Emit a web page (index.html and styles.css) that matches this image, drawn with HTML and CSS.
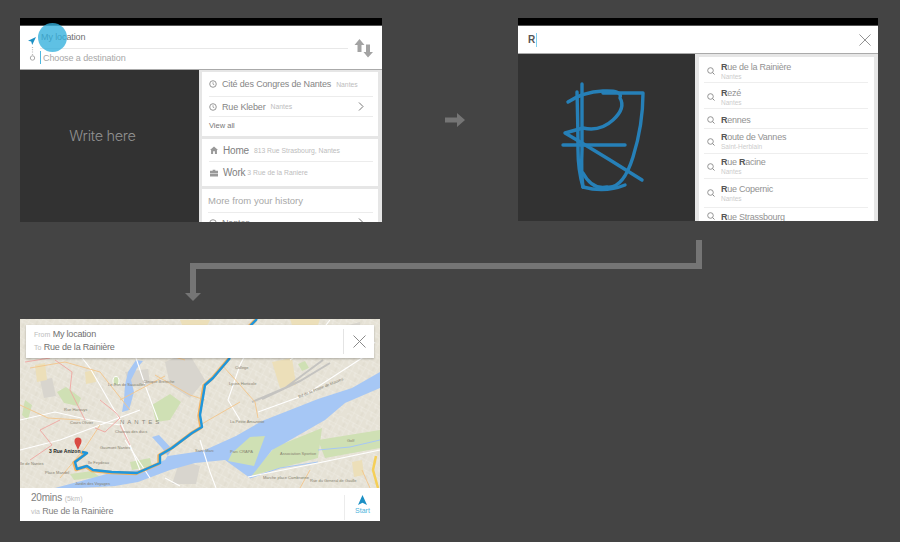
FILE: index.html
```html
<!DOCTYPE html>
<html lang="fr">
<head>
  <meta charset="UTF-8">
  <meta name="viewport" content="width=device-width, initial-scale=1.0">
  <title>Navigation flow</title>
  <link rel="stylesheet" href="styles.css">
</head>
<body>
  <div class="board">
    <div class="board-row">
      <!-- ecran 1 : choix destination -->
      <section class="screen screen-home">
        <div class="status"></div>
        <header class="route-head">
          <div class="route-icons">
            <svg width="12" height="24" viewBox="0 0 12 24">
              <path d="M9 0 1 3.800 4.200 4.600 5.200 8z" fill="#1b8fc4"/>
              <path d="M5.500 10v8" stroke="#bbb" stroke-width="1.200" stroke-dasharray="1 1.300" fill="none"/>
              <circle cx="5.500" cy="21" r="2.200" fill="none" stroke="#aaa" stroke-width="1"/>
            </svg>
          </div>
          <div class="route-fields">
            <div class="field field-from">My location</div>
            <div class="field field-to">Choose a destination</div>
          </div>
          <svg class="swap" width="20" height="20" viewBox="0 0 20 20">
            <path d="M5.500 1 10.500 7H7.500V14H3.500V7H.5z" fill="#a3a3a3"/>
            <path d="M12 6.500h4v7.500h3L14 19.500 9.500 14h2.500z" fill="#a3a3a3"/>
          </svg>
        </header>
        <div class="touch-dot"></div>
        <div class="screen-body">
          <div class="pad pad-home"><span class="write-here">Write here</span></div>
          <div class="side side-home">
            <div class="card">
              <div class="row row-a">
                <svg class="ico" width="8" height="8" viewBox="0 0 9 9"><circle cx="4.500" cy="4.500" r="3.700" fill="none" stroke="#888"/><path d="M4.500 2.500v2.200l1.500.8" fill="none" stroke="#888" stroke-width=".8"/></svg>
                <span class="place">Cité des Congres de Nantes</span><small>Nantes</small>
              </div>
              <div class="row row-a">
                <svg class="ico" width="8" height="8" viewBox="0 0 9 9"><circle cx="4.500" cy="4.500" r="3.700" fill="none" stroke="#888"/><path d="M4.500 2.500v2.200l1.500.8" fill="none" stroke="#888" stroke-width=".8"/></svg>
                <span class="place">Rue Kleber</span><small>Nantes</small>
                <svg class="chev" width="6" height="9" viewBox="0 0 6 9"><path d="M1 .5 5 4.500 1 8.500" fill="none" stroke="#777"/></svg>
              </div>
              <div class="view-all">View all</div>
            </div>
            <div class="card">
              <div class="row row-b">
                <svg class="ico" width="8" height="8" viewBox="0 0 9 9"><path d="M4.500 .5 9 4.500H7.800V9H5.500V6h-2v3H1.200V4.500H0z" fill="#999"/></svg>
                <span class="place-lg">Home</span><small>813 Rue Strasbourg, Nantes</small>
              </div>
              <div class="row row-b">
                <svg class="ico" width="8" height="8" viewBox="0 0 9 9"><path d="M3 2V.8h3V2h3v2.500H0V2zM0 5.200h9V8.500H0z" fill="#999"/></svg>
                <span class="place-lg tight-name">Work</span><small>3 Rue de la Raniere</small>
              </div>
            </div>
            <div class="card">
              <div class="history-title">More from your history</div>
              <div class="row row-a">
                <svg class="ico" width="8" height="8" viewBox="0 0 9 9"><circle cx="4.500" cy="4.500" r="3.700" fill="none" stroke="#888"/></svg>
                <span class="place">Nantes</span>
                <svg class="chev" width="6" height="9" viewBox="0 0 6 9"><path d="M1 .5 5 4.500 1 8.500" fill="none" stroke="#777"/></svg>
              </div>
            </div>
          </div>
        </div>
      </section>

      <div class="next-arrow">
        <svg width="20" height="14" viewBox="0 0 20 14"><path d="M0 4.500H12V0L20 7 12 14V9.500H0z" fill="#757575"/></svg>
      </div>

      <!-- ecran 2 : ecriture -->
      <section class="screen screen-write">
        <div class="status"></div>
        <header class="search-head">
          <span class="typed">R</span><span class="caret"></span>
          <svg class="close" width="12" height="12" viewBox="0 0 13 13"><path d="M.5.5l12 12M12.500.5l-12 12" stroke="#8a8a8a" fill="none"/></svg>
        </header>
        <div class="screen-body">
          <div class="pad pad-write">
            <svg class="scribble" width="177" height="167" viewBox="518 54 177 167">
              <g fill="none" stroke="#2680b8" stroke-width="3.400" stroke-linecap="round" stroke-linejoin="round">
                <path d="M582 84V150Q581 172 583 187"/>
                <path d="M577 92Q578 130 578 150T583 187"/>
                <path d="M568 102Q583 92 603 91T620 98Q626 108 613 120T583 128L565 133 582 143 610 160 642 180"/>
                <path d="M603 93H643Q643 125 633 157T607 187Q592 190 583 173"/>
                <path d="M563 145H625"/>
                <path d="M583 187Q605 193 625 185"/>
              </g>
            </svg>
          </div>
          <div class="side side-write">
            <div class="card results">
              <div class="result r1"><svg class="ico-s" width="8" height="8" viewBox="0 0 8 8"><circle cx="3.500" cy="3.500" r="2.800" fill="none" stroke="#888" stroke-width=".9"/><path d="M5.500 5.500 7.500 7.500" stroke="#888"/></svg><div><p><b>R</b>ue de la Rainière</p><small>Nantes</small></div></div>
              <div class="result r2"><svg class="ico-s" width="8" height="8" viewBox="0 0 8 8"><circle cx="3.500" cy="3.500" r="2.800" fill="none" stroke="#888" stroke-width=".9"/><path d="M5.500 5.500 7.500 7.500" stroke="#888"/></svg><div><p><b>R</b>ezé</p><small>Nantes</small></div></div>
              <div class="result r3"><svg class="ico-s" width="8" height="8" viewBox="0 0 8 8"><circle cx="3.500" cy="3.500" r="2.800" fill="none" stroke="#888" stroke-width=".9"/><path d="M5.500 5.500 7.500 7.500" stroke="#888"/></svg><div><p><b>R</b>ennes</p></div></div>
              <div class="result r4"><svg class="ico-s" width="8" height="8" viewBox="0 0 8 8"><circle cx="3.500" cy="3.500" r="2.800" fill="none" stroke="#888" stroke-width=".9"/><path d="M5.500 5.500 7.500 7.500" stroke="#888"/></svg><div><p><b>R</b>oute de Vannes</p><small>Saint-Herblain</small></div></div>
              <div class="result r5"><svg class="ico-s" width="8" height="8" viewBox="0 0 8 8"><circle cx="3.500" cy="3.500" r="2.800" fill="none" stroke="#888" stroke-width=".9"/><path d="M5.500 5.500 7.500 7.500" stroke="#888"/></svg><div><p><b>R</b>ue <b>R</b>acine</p><small>Nantes</small></div></div>
              <div class="result r6"><svg class="ico-s" width="8" height="8" viewBox="0 0 8 8"><circle cx="3.500" cy="3.500" r="2.800" fill="none" stroke="#888" stroke-width=".9"/><path d="M5.500 5.500 7.500 7.500" stroke="#888"/></svg><div><p><b>R</b>ue Copernic</p><small>Nantes</small></div></div>
              <div class="result r7"><svg class="ico-s" width="8" height="8" viewBox="0 0 8 8"><circle cx="3.500" cy="3.500" r="2.800" fill="none" stroke="#888" stroke-width=".9"/><path d="M5.500 5.500 7.500 7.500" stroke="#888"/></svg><div><p><b>R</b>ue Strassbourg</p></div></div>
            </div>
          </div>
        </div>
      </section>
    </div>

    <!-- ecran 3 : itineraire -->
    <section class="screen screen-map">
      <div class="map">
        <svg class="map-art" width="360" height="169" viewBox="20 319 360 169">
          <defs>
            <pattern id="streets" width="11" height="9" patternUnits="userSpaceOnUse" patternTransform="rotate(28)">
              <path d="M0 0H11M0 0V9M5 0V4M5 4H11" fill="none" stroke="#fff" stroke-width=".5" opacity=".55"/>
              <path d="M8 4V9" fill="none" stroke="#d2cdbf" stroke-width=".4"/>
            </pattern>
          </defs>
          <rect x="20" y="319" width="360" height="169" fill="#e6e2d6"/>
          <rect x="20" y="319" width="360" height="169" fill="url(#streets)"/>
          <!-- zones -->
          <g fill="#d8d5ce">
            <path d="M165 362 188 352 205 380 190 398 170 385z"/>
            <path d="M125 372 148 369 150 384 130 387z"/>
            <path d="M40 380 52 378 56 396 44 398z"/>
            <path d="M180 460 200 466 196 484 172 484z"/>
            <path d="M100 340 120 335 122 350 102 352z"/>
            <path d="M330 330 360 322 362 345 335 350z"/>
          </g>
          <g fill="#ecdfb9">
            <path d="M272 362 292 358 296 385 280 388z"/>
            <path d="M35 365 45 363 47 380 37 382z"/>
            <path d="M85 372 94 370 96 382 86 384z"/>
            <path d="M180 320 210 320 205 330H184z"/>
            <path d="M290 319H320L318 325H292z"/>
            <path d="M352 462 362 460 364 475 354 477z"/>
            <path d="M150 340 165 338 166 350 152 352z"/>
          </g>
          <g fill="#cfe0b4">
            <path d="M57 392 66 387 81 398 78 406 64 403z"/>
            <path d="M152 405 170 394 181 402 170 420 156 422z"/>
            <path d="M298 364 305 361 309 368 302 371z"/>
            <path d="M318 440 380 430V448L325 458z"/>
            <path d="M275 447 322 428 318 458 250 476z"/>
            <path d="M130 462 150 458 152 466 132 470z"/>
            <path d="M70 474 92 471 100 477 74 480z"/>
            <path d="M25 400 32 405 28 420 22 415z"/>
          </g>
          <!-- Loire -->
          <path d="M380 372 352 388 318 399 285 412 262 421 236 436 205 450 195 452 168 456 162 448 152 437 159 435 172 449 165 460 140 470 110 473 85 480 55 488H80L115 486 138 482 170 470 195 463 225 460 250 478 272 450 285 443 325 420 345 403 380 388z" fill="#a6c7f5"/>
          <path d="M232 453 250 437 265 436 254 466 228 461z" fill="#cfe0b4"/>
          <path d="M337 416 347 409 352 410 344 416z" fill="#e6e2d6"/>
          <path d="M136 360 128 372 125 385 124 400 122 412 129 410 134 392 131 380 137 368 143 361z" fill="#a6c7f5"/>
          <ellipse cx="116" cy="381" rx="3" ry="4.500" fill="#cfe0b4" stroke="#fff"/>
          <path d="M250 478 280 468 318 462M318 450 350 447 380 440M272 424 300 410" fill="none" stroke="#a6c7f5" stroke-width="1"/>
          <!-- voies ferrees -->
          <path d="M252 402 285 388 323 360M262 399 300 381 330 363" fill="none" stroke="#c4c3c0" stroke-width="2"/>
          <!-- routes -->
          <g fill="none" stroke="#fff" stroke-width="1.100">
            <path d="M258 412 305 395 362 358 375 342"/>
            <path d="M248 477 318 463 380 450"/>
            <path d="M165 478 180 486M20 450 60 440 100 425 140 410"/>
            <path d="M60 330 90 368 120 420 140 470"/>
            <path d="M135 355 145 385 158 420"/>
            <path d="M200 440 210 472 216 488"/>
            <path d="M125 440 150 478"/>
            <path d="M20 420 55 412 90 420 120 425"/>
            <path d="M258 330 240 365 228 400 240 420"/>
            <path d="M330 320 310 345 290 360"/>
          </g>
          <g fill="none" stroke="#f3c58a" stroke-width=".9">
            <path d="M222 365 240 385 255 402 258 418"/>
            <path d="M155 375 190 395 205 400M120 400 165 376"/>
            <path d="M30 368 65 362 100 372 130 410"/>
            <path d="M20 405 48 418 80 420"/>
            <path d="M100 425 85 448 60 478"/>
            <path d="M200 425 240 402"/>
            <path d="M310 470 300 488M362 470 370 488"/>
            <path d="M110 330 150 350 185 360"/>
          </g>
          <g fill="none" stroke="#efa6a2" stroke-width=".9">
            <path d="M55 360 72 372 70 390 85 420"/>
            <path d="M100 400 115 412 120 418 105 432 95 428"/>
            <path d="M60 420 40 430 52 445 30 460"/>
            <path d="M120 425 130 445"/>
            <path d="M25 362 50 358"/>
          </g>
          <path d="M376 456 373 470 378 488" fill="none" stroke="#f5cf57" stroke-width="2.500"/>
          <!-- trajet -->
          <path d="M257 319 250 326M230 358 213 378 205 385 200 415 202 427 192 433 172 448 160 455 160 463 137 473 112 472 93 470 87 466 77 469 75 462 87 453 82 452" fill="none" stroke="#f3b15f" stroke-width="3.400" transform="translate(-1 .5)" stroke-linejoin="round"/>
          <path d="M257 319 250 326M230 358 213 378 205 385 200 415 202 427 192 433 172 448 160 455 160 463 137 473 112 472 93 470 87 466 77 469 75 462 87 453 82 452" fill="none" stroke="#1f96dc" stroke-width="2.400" stroke-linejoin="round"/>
          <path d="M78 450C76 445 74.500 443.500 74.500 441A3.500 3.500 0 0 1 81.500 441C81.500 443.500 80 445 78 450z" fill="#d94a42"/>
          <!-- libelles -->
          <g class="map-labels">
            <text x="120" y="424" class="lbl-city">NANTES</text>
            <text x="49" y="453" class="lbl-pin">3 Rue Anizon</text>
            <text x="108" y="386">Le Bon de Saucailles</text>
            <text x="143" y="383">Clinique Breteche</text>
            <text x="64" y="411">Rue Harouys</text>
            <text x="70" y="424">Cours Olivier</text>
            <text x="115" y="433">Chateau des ducs</text>
            <text x="100" y="449">Gaumont Nantes</text>
            <text x="88" y="464">Ile Feydeau</text>
            <text x="45" y="474">Place Mandel</text>
            <text x="75" y="485">Jardin des Voyages</text>
            <text x="229" y="385">Lycee Horticole</text>
            <text x="230" y="423">La Petite Amazonie</text>
            <text x="230" y="453">Parc CRAPA</text>
            <text x="280" y="455">Association Sportive</text>
            <text x="263" y="479">Marche place Cambronne</text>
            <text x="310" y="482">Rue du General de Gaulle</text>
            <text x="299" y="398" transform="rotate(-22 299 398)">Bd de la Prairie de Mauves</text>
            <text x="195" y="452">Saint Marc</text>
            <text x="347" y="442">Golf</text>
            <text x="235" y="369">College</text>
            <text x="20" y="465">Ile de Nantes</text>
          </g>
        </svg>
        <div class="route-card">
          <div class="route-lines">
            <div><span class="hint">From</span> My location</div>
            <div><span class="hint">To</span> Rue de la Rainière</div>
          </div>
          <div class="route-close">
            <svg width="13" height="13" viewBox="0 0 13 13"><path d="M.5.5l12 12M12.500.5l-12 12" stroke="#8a8a8a" fill="none"/></svg>
          </div>
        </div>
      </div>
      <footer class="trip">
        <div class="trip-text">
          <div class="trip-time">20mins <span class="hint">(5km)</span></div>
          <div class="trip-via"><span class="hint">via</span> Rue de la Rainière</div>
        </div>
        <div class="trip-start">
          <svg width="9" height="10" viewBox="0 0 9 10"><path d="M4.500 0 9 10 4.500 7.800 0 10z" fill="#1b8fc4"/></svg>
          <span>Start</span>
        </div>
      </footer>
    </section>

    <!-- fleche coudee -->
    <svg class="elbow" width="900" height="542" viewBox="0 0 900 542">
      <path d="M699 240V266H193V294" fill="none" stroke="#757575" stroke-width="6"/>
      <path d="M185 293H201L193 301z" fill="#757575"/>
    </svg>
  </div>
</body>
</html>
```

FILE: styles.css
```css
/* page */
body {
  margin: 0;
  background-color: #444444;
  font-family: "Liberation Sans", Arial, sans-serif;
  color: #858585;
  overflow: hidden;
}

.board {
  position: relative;
  width: 900px;
  height: 542px;
  padding: 18px 0 0 20px;
  box-sizing: border-box;
}

.board-row {
  display: flex;
  align-items: flex-start;
}

.screen {
  position: relative;
  background-color: #fff;
  overflow: hidden;
}

.status {
  height: 7px;
  background-color: #000;
  border-bottom: 1px solid #555;
}

.screen-body {
  display: flex;
}

.pad {
  background-color: #323232;
  flex-shrink: 0;
}

.side {
  flex: 1;
  background-color: #e6e6e6;
  box-sizing: border-box;
}

.card {
  background-color: #fff;
}

small {
  font-size: 6.8px;
  color: #bdbdbd;
}

/* ecran 1 */
.screen-home {
  width: 362px;
  height: 204px;
}

.route-head {
  display: flex;
  height: 43px;
  border-bottom: 1px solid #aaa;
  box-sizing: content-box;
}

.route-icons {
  width: 20px;
  padding: 11px 0 0 7px;
  box-sizing: border-box;
}

.route-fields {
  width: 308px;
}

.field {
  font-size: 9px;
  letter-spacing: -0.1px;
  box-sizing: border-box;
}

.field-from {
  height: 23px;
  padding: 6px 0 0 1px;
  border-bottom: 1px solid #e8e8e8;
  color: #707070;
}

.field-to {
  height: 13px;
  margin-top: 2px;
  padding-left: 2px;
  line-height: 14px;
  color: #a8a8a8;
  border-left: 1px solid #4db8e0;
}

.swap {
  margin: 12px 0 0 6px;
}

.touch-dot {
  position: absolute;
  left: 18px;
  top: 5px;
  width: 29px;
  height: 29px;
  border-radius: 50%;
  background-color: rgba(50, 175, 220, 0.78);
}

.pad-home {
  width: 179px;
  height: 152px;
  display: flex;
  align-items: center;
  justify-content: center;
}

.write-here {
  font-family: Inter, "Liberation Sans", sans-serif;
  font-weight: 300;
  font-size: 14.5px;
  color: #909090;
  letter-spacing: -0.3px;
  margin: -22px 0 0 -14px;
}

.side-home {
  padding: 2px 4px 0 3px;
}

.side-home .card {
  margin-bottom: 3px;
  padding: 0 5px 0 7px;
}

.row {
  display: flex;
  align-items: center;
  border-bottom: 1px solid #ececec;
  box-sizing: border-box;
}

.row-a {
  height: 25px;
}

.row-a + .row-a {
  height: 20px;
}

.history-title + .row-a {
  height: 20px;
}

.row-b {
  height: 23px;
}

.row-b:last-child {
  height: 24px;
  padding-bottom: 3px;
  border-bottom: none;
}

.ico {
  margin-right: 5px;
  flex-shrink: 0;
}

.place {
  font-size: 9px;
  letter-spacing: -0.15px;
  color: #858585;
  margin: 0 5px 0 0;
}

.place-lg {
  font-size: 10px;
  letter-spacing: -0.2px;
  color: #808080;
  margin-right: 5px;
}

.tight-name {
  margin-right: 2px;
}

.row-b .ico {
  margin: 0 5px 0 1px;
}

.chev {
  margin-left: auto;
  margin-right: 9px;
}

.view-all {
  font-size: 7.5px;
  color: #777;
  height: 19px;
  line-height: 18px;
}

.history-title {
  height: 23px;
  line-height: 24px;
  margin-left: -1px;
  font-size: 9.5px;
  color: #a8a8a8;
  border-bottom: 1px solid #ececec;
}

/* fleche */
.next-arrow {
  width: 136px;
  height: 204px;
  display: flex;
  align-items: center;
  justify-content: center;
}

.next-arrow svg {
  margin-left: 9px;
}

/* ecran 2 */
.screen-write {
  width: 360px;
  height: 203px;
}

.search-head {
  display: flex;
  align-items: center;
  height: 27px;
  padding-left: 10px;
  border-bottom: 1px solid #aaa;
  box-sizing: content-box;
}

.typed {
  font-size: 10px;
  font-weight: bold;
  color: #555;
}

.caret {
  width: 1px;
  height: 14px;
  margin-left: 1px;
  background-color: #7fd0f0;
}

.close {
  margin-left: auto;
  margin-right: 7px;
}

.pad-write {
  width: 177px;
  height: 167px;
}

.scribble {
  display: block;
}

.side-write {
  padding: 3px 4px 0 4px;
  height: 167px;
  overflow: hidden;
}

.results {
  padding: 0 6px 0 0;
  height: 180px;
}

.result {
  display: flex;
  align-items: center;
  margin-left: 5px;
  padding-left: 2px;
  border-bottom: 1px solid #eeeeee;
  box-sizing: border-box;
}

.result:last-child {
  border-bottom: none;
  align-items: flex-start;
}

.result p {
  margin: 0;
  font-size: 9px;
  letter-spacing: -0.25px;
  line-height: 11px;
  color: #929292;
}

.result b {
  color: #555;
}

.result small {
  display: block;
  font-size: 6.5px;
  line-height: 8px;
  color: #cccccc;
}

.ico-s {
  flex-shrink: 0;
  margin-right: 6px;
  margin-left: 1px;
}

.r1 { height: 26px; padding-top: 3px; }
.r2 { height: 26px; padding-top: 3px; }
.r3 { height: 20px; padding-top: 3px; }
.r4 { height: 25px; padding-top: 1px; }
.r5 { height: 25px; padding-top: 1px; }
.r6 { height: 29px; }
.r7 { height: 20px; padding-top: 4px; }

/* ecran 3 */
.screen-map {
  width: 360px;
  height: 202px;
  margin-top: 97px;
}

.map {
  position: relative;
  height: 169px;
}

.map-art {
  display: block;
}

.map-labels text {
  font-family: "Liberation Sans", Arial, sans-serif;
  font-size: 4px;
  fill: #85816f;
}

.map-labels .lbl-city {
  font-size: 6px;
  letter-spacing: 3px;
  fill: #8b867b;
}

.map-labels .lbl-pin {
  font-size: 5px;
  font-weight: bold;
  fill: #222;
}

.route-card {
  position: absolute;
  left: 6px;
  top: 6px;
  width: 348px;
  height: 33px;
  display: flex;
  background-color: #fff;
  box-shadow: 0 1px 2px rgba(0, 0, 0, 0.25);
}

.route-lines {
  flex: 1;
  padding: 3px 0 0 8px;
  font-size: 9px;
  letter-spacing: -0.2px;
  line-height: 13px;
  color: #707070;
}

.hint {
  font-size: 7px;
  letter-spacing: 0;
  color: #bdbdbd;
}

.route-close {
  width: 30px;
  margin: 4px 0;
  border-left: 1px solid #e4e4e4;
  display: flex;
  align-items: center;
  justify-content: center;
}

.trip {
  display: flex;
  height: 33px;
}

.trip-text {
  flex: 1;
  padding: 4px 0 0 11px;
  line-height: 12px;
  color: #808080;
}

.trip-time {
  font-size: 10px;
  letter-spacing: -0.2px;
}

.trip-via {
  font-size: 9px;
  letter-spacing: -0.2px;
}

.trip-start {
  width: 35px;
  margin: 7px 0 1px;
  border-left: 1px solid #ececec;
  display: flex;
  flex-direction: column;
  align-items: center;
  gap: 2px;
  font-size: 7px;
  color: #4db4dc;
}

.elbow {
  position: absolute;
  left: 0;
  top: 0;
  pointer-events: none;
}
```
